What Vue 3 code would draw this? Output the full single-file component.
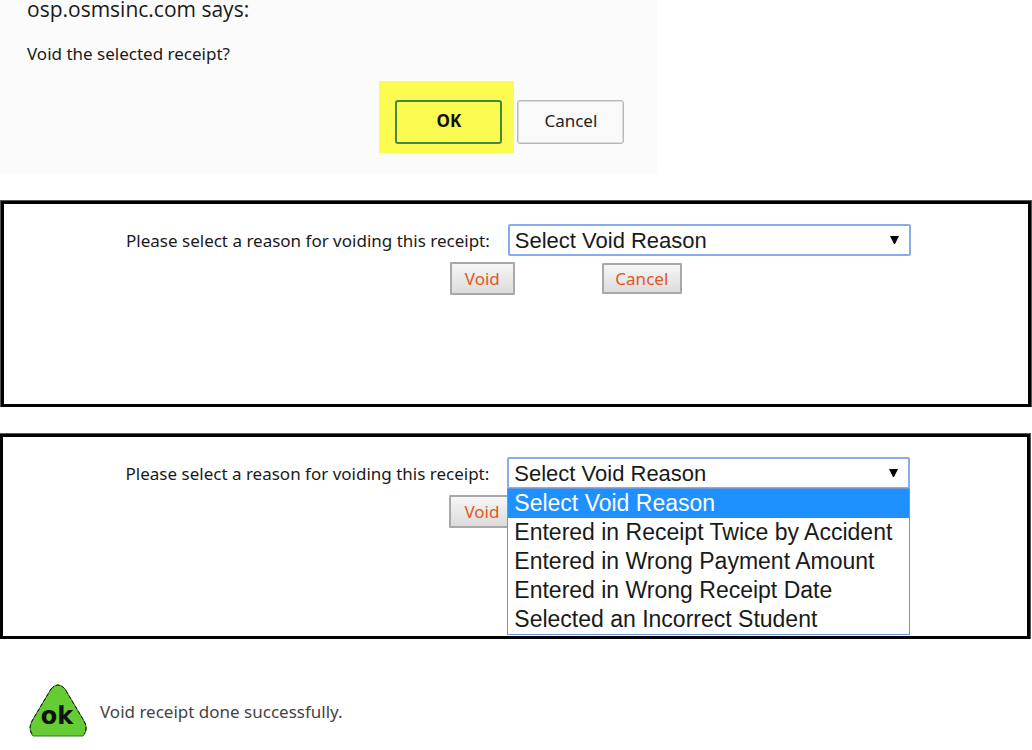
<script setup>
import { ref } from 'vue'

const reasons = [
  'Select Void Reason',
  'Entered in Receipt Twice by Accident',
  'Entered in Wrong Payment Amount',
  'Entered in Wrong Receipt Date',
  'Selected an Incorrect Student',
]
const panels = [
  { id: 'reason-closed', open: false },
  { id: 'reason-open', open: true },
]
const chosen = ref([reasons[0], reasons[0]])
</script>

<template>
  <main class="page">
    <section class="dialog" role="dialog" aria-labelledby="dialog-title">
      <h1 id="dialog-title" class="dialog-title">osp.osmsinc.com says:</h1>
      <p class="dialog-text">Void the selected receipt?</p>
      <div class="dialog-actions">
        <div class="highlight">
          <button type="button" class="dialog-button primary">OK</button>
        </div>
        <button type="button" class="dialog-button">Cancel</button>
      </div>
    </section>

    <form
      v-for="(panel, index) in panels"
      :key="panel.id"
      class="panel"
      :class="{ 'panel-open': panel.open }"
      @submit.prevent
    >
      <div class="field">
        <label class="field-label" :for="panel.id">Please select a reason for voiding this receipt:</label>
        <div class="select-box">
          <select :id="panel.id" v-model="chosen[index]" class="select">
            <option v-for="reason in reasons" :key="reason">{{ reason }}</option>
          </select>
          <svg class="arrow" viewBox="0 0 9 9" aria-hidden="true"><path d="M0 0H9L5 8H4Z" /></svg>
          <ul v-if="panel.open" class="options" role="listbox" aria-label="Void reason">
            <li
              v-for="reason in reasons"
              :key="reason"
              class="option"
              :class="{ selected: reason === chosen[index] }"
              role="option"
              :aria-selected="reason === chosen[index]"
              @click="chosen[index] = reason"
            >{{ reason }}</li>
          </ul>
        </div>
      </div>
      <div class="panel-actions">
        <button type="submit" class="panel-button">Void</button>
        <button v-if="!panel.open" type="button" class="panel-button small">Cancel</button>
      </div>
    </form>

    <section class="result" role="status">
      <svg class="ok-icon" viewBox="0 0 58 54" aria-hidden="true">
        <path
          d="M22 5Q29 -3 36 5L55 37Q60 46 54 52H4Q-1 46 3 37Z"
          fill="#66cc33"
          stroke="#2f7a1c"
          stroke-width="1"
        />
        <path d="M22 5Q29 -3 36 5L55 37Q59 44 55 50M3 50Q-1 44 3 37L22 5" fill="none" stroke="#111" stroke-width="1" stroke-dasharray="4 2" />
        <text x="28" y="40" text-anchor="middle" class="ok-text">ok</text>
      </svg>
      <p class="result-text">Void receipt done successfully.</p>
    </section>
  </main>
</template>

<style>
body {
  margin: 0;
  background: #fff;
}
</style>

<style scoped>
.page {
  display: flex;
  flex-direction: column;
  gap: 26px;
  font-family: "Noto Sans", "Open Sans", sans-serif;
  color: #1a1a1a;
}

.dialog {
  box-sizing: border-box;
  width: 63.7%;
  min-width: 640px;
  padding: 0 33px 21px 27px;
  background: #fbfbfb;
}

.dialog-title {
  margin: 0;
  font: 400 21px/18px "Open Sans", "Noto Sans", sans-serif;
}

.dialog-text {
  margin: 26px 0 0;
  font-size: 17px;
  line-height: 20px;
}

.dialog-actions {
  display: flex;
  justify-content: flex-end;
  align-items: center;
  gap: 3px;
  margin-top: 17px;
}

.highlight {
  padding: 19px 12px 9px 16px;
  background: #fbfb52;
}

.dialog-button {
  width: 107px;
  height: 44px;
  margin-top: 10px;
  padding: 0 0 3px;
  border: 1px solid #b8b8b8;
  border-radius: 3px;
  background: #f9f9f9;
  box-shadow: inset 0 0 0 1px #dcdcdc;
  color: #222;
  font: 17px "Noto Sans", "Open Sans", sans-serif;
}

.dialog-button.primary {
  display: block;
  margin-top: 0;
  border: 2px solid #48883c;
  background: #fbfb52;
  box-shadow: none;
  color: #111;
  font-weight: 700;
}

.panel {
  box-sizing: border-box;
  min-height: 207px;
  padding: 23px 0 0 5px;
  border: 1px solid #555;
  border-bottom: 0;
  background: #fff;
  box-shadow: inset 0 0 0 3px #000;
}

.panel-open {
  min-height: 206px;
  margin-right: 1px;
  padding-left: 6px;
  border-left: 0;
}

.field {
  display: flex;
  align-items: center;
}

.field-label {
  flex: none;
  width: 47.2%;
  padding: 2px 18px 0 0;
  text-align: right;
  font-size: 17px;
  line-height: 24px;
  white-space: nowrap;
}

.select-box {
  position: relative;
  width: 39.3%;
}

.select {
  display: block;
  box-sizing: border-box;
  width: 100%;
  height: 32px;
  padding: 0 30px 0 5px;
  border: 2px solid #86acec;
  border-radius: 2px;
  outline: none;
  appearance: none;
  background: #fff;
  color: #1a1a1a;
  font: 22px "Liberation Sans", Arial, sans-serif;
}

.arrow {
  position: absolute;
  top: 12px;
  right: 12px;
  width: 9px;
  height: 9px;
}

.options {
  position: absolute;
  top: 31px;
  left: 0;
  right: 0;
  margin: 0;
  padding: 0;
  border: 1px solid #6c96dc;
  background: #fff;
  list-style: none;
  font: 23px/29px "Liberation Sans", Arial, sans-serif;
}

.option {
  padding-left: 6px;
  white-space: nowrap;
}

.option.selected {
  background: #1e90ff;
  color: #fff;
}

.panel-actions {
  display: flex;
  align-items: center;
  gap: 87px;
  margin-top: 6px;
  padding-left: 43.3%;
}

.panel-button {
  width: 65px;
  height: 33px;
  padding: 0;
  border: 2px solid #a8a8a8;
  border-radius: 1px;
  background: linear-gradient(#f6f6f6, #dcdcdc);
  color: #e2571e;
  font: 17px "Noto Sans", "Open Sans", sans-serif;
}

.panel-button.small {
  width: 80px;
  height: 31px;
}

.result {
  display: flex;
  align-items: center;
  gap: 13px;
  padding: 19px 0 12px 29px;
}

.ok-icon {
  width: 58px;
  height: 54px;
}

.ok-text {
  font: 700 24px "DejaVu Sans", sans-serif;
  fill: #111;
}

.result-text {
  margin: 0;
  padding-top: 2px;
  color: #444;
  font-size: 17px;
  line-height: 24px;
}
</style>
